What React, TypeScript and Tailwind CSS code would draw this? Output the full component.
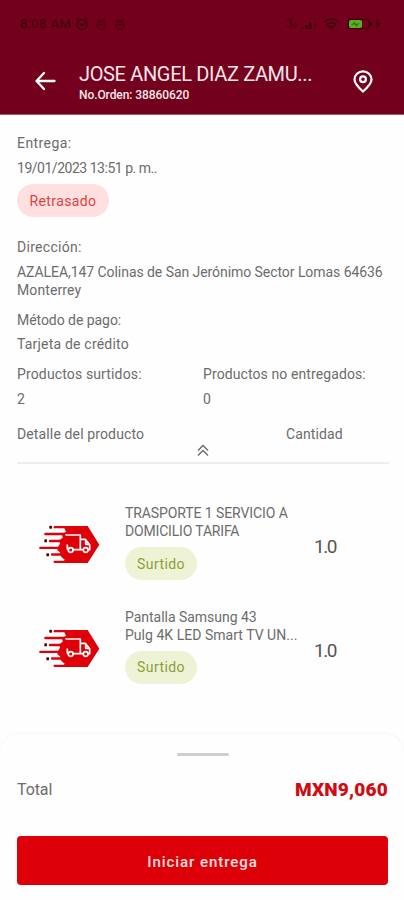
import React from "react";

function TruckIcon() {
  return (
    <svg className="h-[39px] w-[62px] shrink-0" viewBox="6 10 186 117" fill="none">
      <path
        d="M82 13H155L190 69L155 124H80L86 114L76 106L72 92L64 86L66 76L72 66L70 56L80 48L78 38L90 30Z"
        fill="#e00009"
      />
      <g stroke="#e00009" strokeWidth="7" strokeLinecap="round">
        <path d="M56 16.500H92M28 37H86M42 58H76M13 78.500H76M48 98.500H82M56 120.500H92" />
      </g>
      <g fill="#4a0610">
        <rect x="40" y="12" width="8" height="9" rx="2" />
        <rect x="25" y="53" width="8" height="9" rx="2" />
        <rect x="31" y="95" width="8" height="9" rx="2" />
      </g>
      <g stroke="#fff" strokeWidth="5" strokeLinejoin="round" strokeLinecap="round">
        <path d="M90 40H133V84H112M97 83H94V70M133 53H148L161 69V84H156M149 54V68H160M141 84H134" />
        <circle cx="104" cy="85" r="7" fill="#e00009" />
        <circle cx="149" cy="85" r="7" fill="#e00009" />
      </g>
    </svg>
  );
}

function SmallClock({ className }: { className: string }) {
  return (
    <svg className={className} viewBox="0 0 10 13" fill="none" stroke="currentColor" strokeWidth="1.3">
      <path d="M1 3L3 1M9 3L7 1M3 2.500H7M3 6L5 7.500L7 6" />
      <circle cx="5" cy="7.500" r="3.800" />
    </svg>
  );
}

function StatusBar() {
  return (
    <div className="flex h-12 items-center pl-[20px] pr-[22px] text-[#3e0010]">
      <span className="text-[13px] tracking-[0.45px]">8:08 AM</span>
      <svg className="ml-[4px] h-[14px] w-[14px]" viewBox="0 0 14 14" fill="none" stroke="currentColor" strokeWidth="1.5">
        <circle cx="7" cy="7.5" r="5" />
        <path d="M1 3L3.500 1M13 3L10.500 1M4.500 6.500L7 8.500L9.500 6.500" />
      </svg>
      <SmallClock className="ml-[7px] h-[13px] w-[10px] opacity-60" />
      <SmallClock className="ml-[9px] h-[13px] w-[10px] opacity-70" />
      <svg className="ml-auto h-[14px] w-[98px]" viewBox="0 0 98 14" fill="none">
        <g stroke="currentColor" strokeWidth="1.2" opacity=".75">
          <path d="M2 2H8L5 5Q9 6 7 9Q5 11 2 9M9 8L11 11L13 8M11 6V12" />
        </g>
        <g fill="currentColor">
          <path d="M17 10h3v2h-3zM21 8h3v4h-3zM25 5h2.500v7H25z" />
          <path d="M30 2h2.500v10H30z" opacity=".25" />
        </g>
        <g stroke="currentColor" strokeWidth="1.6">
          <path d="M40 5Q47.500-1 55 5M43 7.500Q47.500 4 52 7.500" />
          <path d="M45.500 9.500L47.500 12L49.500 9.500Z" fill="currentColor" />
        </g>
        <rect x="64" y="2.500" width="21" height="9" rx="3" stroke="currentColor" strokeWidth="1.400" />
        <rect x="65" y="3" width="13" height="8" rx="2" fill="#5fae21" />
        <path d="M67 8L71 4.500L72 7L76 6L72 10L71 7.500Z" fill="#277d16" />
        <path d="M87 5V9" stroke="currentColor" strokeWidth="2" />
        <path d="M94.500 2L91 7.500H93.500L92 12L97 6H94Z" fill="currentColor" />
      </svg>
    </div>
  );
}

type Product = { lines: [string, string]; tracking: [string, string]; quantity: string };

const products: Product[] = [
  {
    lines: ["TRASPORTE 1 SERVICIO A", "DOMICILIO TARIFA"],
    tracking: ["tracking-[-0.09px]", "tracking-[-0.17px]"],
    quantity: "1.0",
  },
  {
    lines: ["Pantalla Samsung 43", "Pulg 4K LED Smart TV UN..."],
    tracking: ["tracking-[-0.03px]", "tracking-[0.03px]"],
    quantity: "1.0",
  },
];

function ProductRow({ product }: { product: Product }) {
  return (
    <li className="flex h-[103.5px] items-start">
      <div className="pl-[21px] pt-[21px]">
        <TruckIcon />
      </div>
      <div className="ml-[25px] w-[189px] whitespace-nowrap leading-[18px]">
        <p className={product.tracking[0]}>{product.lines[0]}</p>
        <p className={product.tracking[1]}>{product.lines[1]}</p>
        <span className="mt-[7px] flex h-[33px] w-[72px] items-center justify-center rounded-full bg-[#eef3d6] tracking-[0.4px] text-[#8c9e38]">
          Surtido
        </span>
      </div>
      <span className="pt-[33px] text-[19px] leading-[20px] tracking-[-1.5px] text-[#555]">{product.quantity}</span>
    </li>
  );
}

export default function App() {
  return (
    <main className="flex h-[900px] w-[404px] flex-col overflow-hidden bg-[#fefefe] font-[Roboto,sans-serif] text-[14px] leading-[18px] text-[#6c6c6c]">
      <header className="h-[115px] shrink-0 border-b border-[#a65c6d] bg-[#73001d]">
        <StatusBar />
        <div className="flex h-[66px] items-center text-[#f6e6e8]">
          <svg className="ml-[35px] h-[20px] w-[21px]" viewBox="0 0 21 20" fill="none" stroke="#fff" strokeWidth="2.300" strokeLinecap="round" strokeLinejoin="round">
            <path d="M19.500 10H2M9 2L1.500 10L9 18" />
          </svg>
          <div className="ml-[23px] w-[274px] whitespace-nowrap pt-[4px]">
            <h1 className="text-[20px] leading-[22px] tracking-[-0.35px]">JOSE ANGEL DIAZ ZAMU...</h1>
            <p className="mt-[2px] text-[12px] font-medium leading-[16px] tracking-[-0.08px]">No.Orden: 38860620</p>
          </div>
          <svg className="h-[23px] w-[20px]" viewBox="0 0 20 23" fill="none" stroke="#fff" strokeWidth="2.200">
            <path d="M10 21.500Q1.500 14 1.500 9.500A8.500 8.200 0 0 1 18.500 9.500Q18.500 14 10 21.500Z" />
            <circle cx="10" cy="9.300" r="2.900" />
          </svg>
        </div>
      </header>

      <section className="flex shrink-0 flex-col whitespace-nowrap pl-[17px] pr-[15px] pt-[19px]">
        <p className="tracking-[0.42px]">Entrega:</p>
        <p className="mt-[7px] tracking-[-0.48px]">19/01/2023 13:51 p. m..</p>
        <span className="mt-[7px] flex h-[33px] w-[92px] items-center justify-center rounded-full bg-[#ffdfdf] tracking-[0.4px] text-[#dc4444]">
          Retrasado
        </span>
        <p className="mt-[21px] tracking-[0.3px]">Dirección:</p>
        <p className="mt-[7px] tracking-[-0.06px]">AZALEA,147 Colinas de San Jerónimo Sector Lomas 64636</p>
        <p className="tracking-[0.1px]">Monterrey</p>
        <p className="mt-[12px] tracking-[-0.05px]">Método de pago:</p>
        <p className="mt-[6px] tracking-[0.2px]">Tarjeta de crédito</p>
        <div className="mt-[12px] grid grid-cols-2">
          <p className="tracking-[0.14px]">Productos surtidos:</p>
          <p className="tracking-[0.1px]">Productos no entregados:</p>
          <p className="mt-[7px]">2</p>
          <p className="mt-[7px]">0</p>
        </div>
        <div className="mt-[17px] flex">
          <p className="w-[269px] tracking-[0.13px]">Detalle del producto</p>
          <p className="tracking-[0.1px]">Cantidad</p>
        </div>
        <div className="flex h-[21px] justify-center border-b-2 border-[#eeeeee]">
          <svg className="mt-px h-[13px] w-[12px]" viewBox="0 0 12 13" fill="none" stroke="#666" strokeWidth="1.300">
            <path d="M1 6.500L6 1.500L11 6.500M1 11.500L6 6.500L11 11.500" />
          </svg>
        </div>
      </section>

      <ul className="h-[270px] shrink-0 px-[17px] pt-[40px]">
        {products.map((product) => (
          <ProductRow key={product.lines[0]} product={product} />
        ))}
      </ul>

      <footer className="flex h-[167px] shrink-0 flex-col rounded-t-[20px] bg-[#fefefe] pl-[17px] pr-[16px] pt-[19px] shadow-[0_-1px_3px_rgba(0,0,0,0.04)]">
        <div className="h-[3px] w-[52px] self-center rounded-full bg-[#cbcfcf]" />
        <div className="mt-[22px] flex h-[24px] items-center justify-between">
          <span className="text-[16px] tracking-[-0.1px]">Total</span>
          <span className="text-[19px] font-black tracking-[0.2px] text-[#d10b12]">MXN9,060</span>
        </div>
        <button className="mt-[34px] h-[49px] w-[371px] shrink-0 rounded-[4px] bg-[#de0009] pt-[2px] text-[15px] font-medium tracking-[0.95px] text-[#ffe0e0]">
          Iniciar entrega
        </button>
      </footer>
    </main>
  );
}
